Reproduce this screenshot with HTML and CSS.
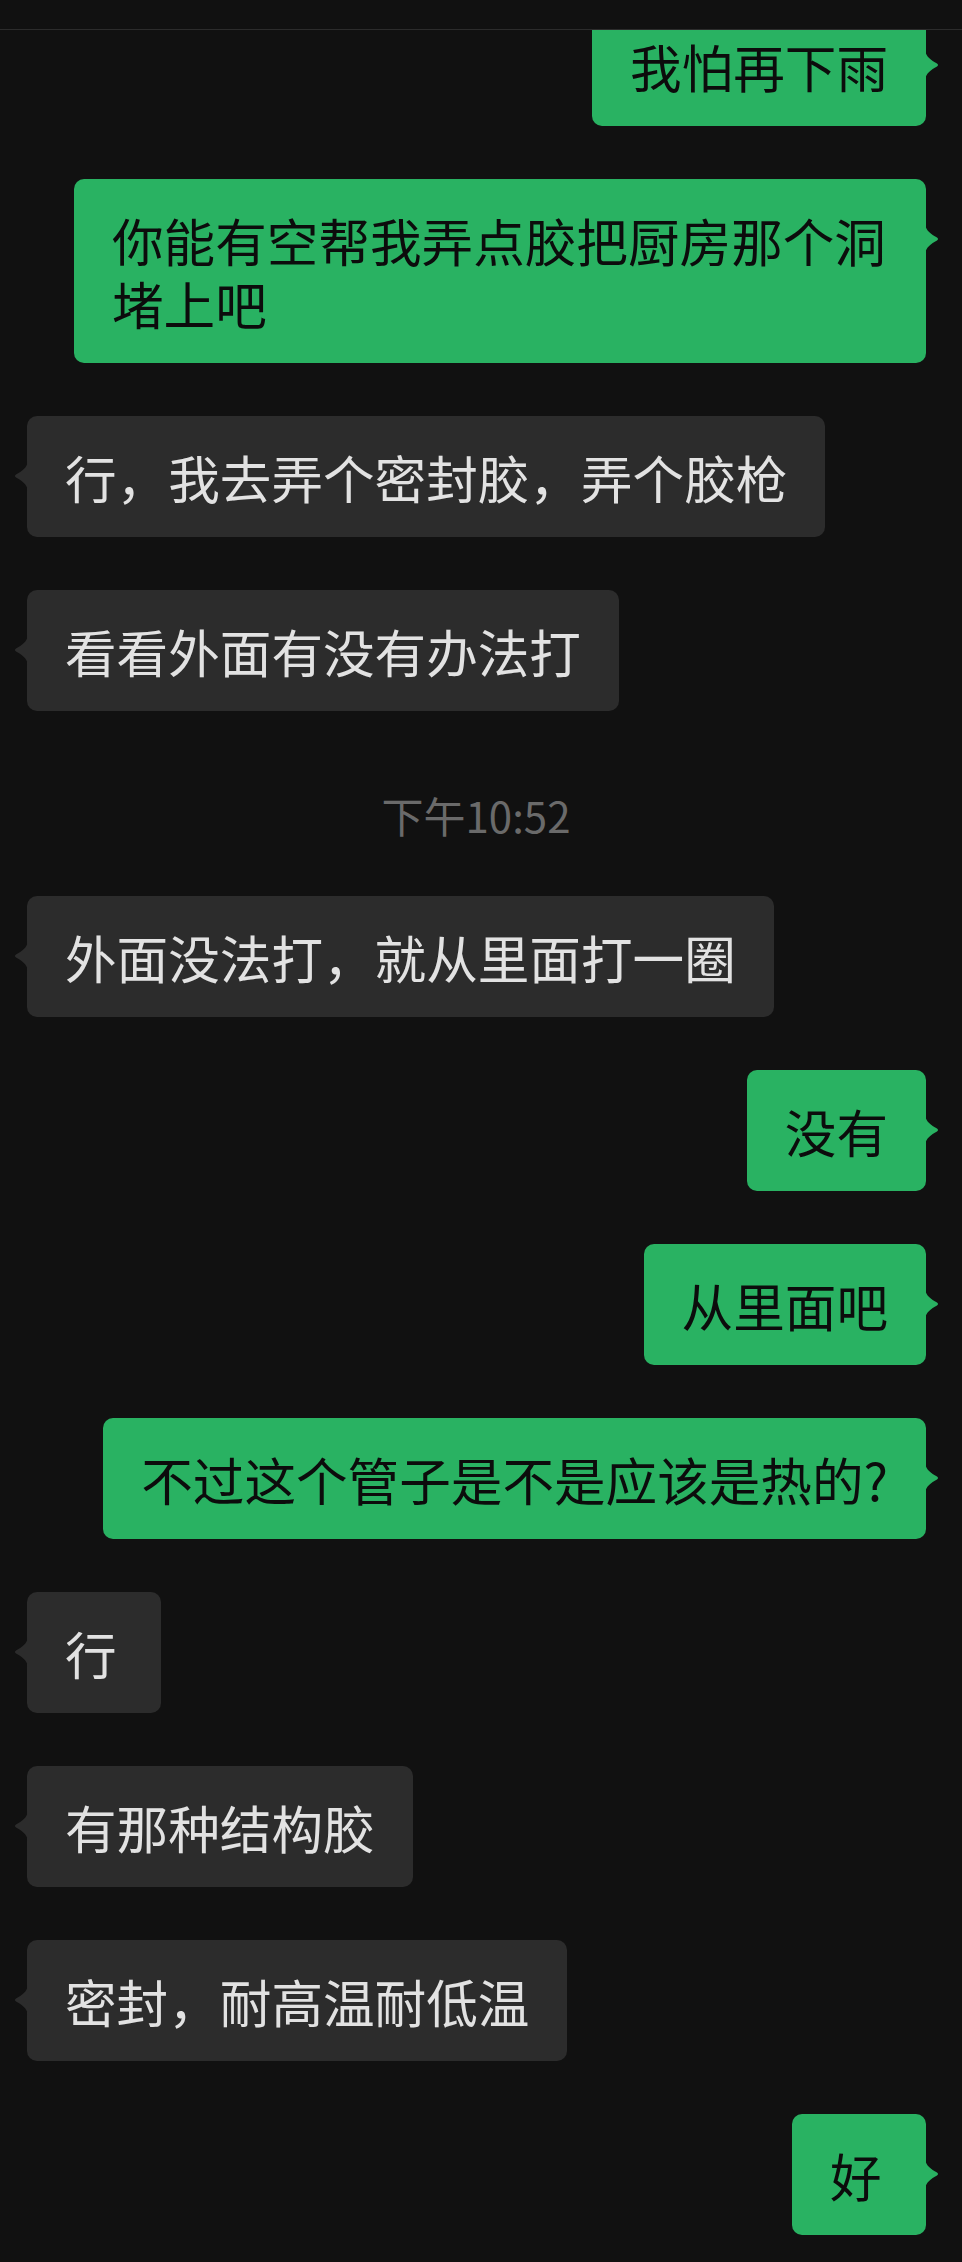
FILE: index.html
```html
<!DOCTYPE html>
<html lang="zh-CN">
<head>
<meta charset="utf-8">
<title>聊天记录</title>
<link rel="stylesheet" href="styles.css">
</head>
<body>
<div class="topbar"></div>
<main class="chat">
  <div class="row sent"><div class="bubble">我怕再下雨<svg class="tail" viewBox="0 0 14 30"><path d="M14 0 C13 7 8 10 2 13.5 Q0 15 2 16.5 C8 20 13 23 14 30 Z"/></svg></div></div>
  <div class="row sent"><div class="bubble">你能有空帮我弄点胶把厨房那个洞堵上吧<svg class="tail" viewBox="0 0 14 30"><path d="M14 0 C13 7 8 10 2 13.5 Q0 15 2 16.5 C8 20 13 23 14 30 Z"/></svg></div></div>
  <div class="row recv"><div class="bubble">行，我去弄个密封胶，弄个胶枪<svg class="tail" viewBox="0 0 14 30"><path d="M14 0 C13 7 8 10 2 13.5 Q0 15 2 16.5 C8 20 13 23 14 30 Z"/></svg></div></div>
  <div class="row recv"><div class="bubble">看看外面有没有办法打<svg class="tail" viewBox="0 0 14 30"><path d="M14 0 C13 7 8 10 2 13.5 Q0 15 2 16.5 C8 20 13 23 14 30 Z"/></svg></div></div>
  <div class="time">下午10:52</div>
  <div class="row recv"><div class="bubble">外面没法打，就从里面打一圈<svg class="tail" viewBox="0 0 14 30"><path d="M14 0 C13 7 8 10 2 13.5 Q0 15 2 16.5 C8 20 13 23 14 30 Z"/></svg></div></div>
  <div class="row sent"><div class="bubble">没有<svg class="tail" viewBox="0 0 14 30"><path d="M14 0 C13 7 8 10 2 13.5 Q0 15 2 16.5 C8 20 13 23 14 30 Z"/></svg></div></div>
  <div class="row sent"><div class="bubble">从里面吧<svg class="tail" viewBox="0 0 14 30"><path d="M14 0 C13 7 8 10 2 13.5 Q0 15 2 16.5 C8 20 13 23 14 30 Z"/></svg></div></div>
  <div class="row sent"><div class="bubble">不过这个管子是不是应该是热的?<svg class="tail" viewBox="0 0 14 30"><path d="M14 0 C13 7 8 10 2 13.5 Q0 15 2 16.5 C8 20 13 23 14 30 Z"/></svg></div></div>
  <div class="row recv"><div class="bubble">行<svg class="tail" viewBox="0 0 14 30"><path d="M14 0 C13 7 8 10 2 13.5 Q0 15 2 16.5 C8 20 13 23 14 30 Z"/></svg></div></div>
  <div class="row recv"><div class="bubble">有那种结构胶<svg class="tail" viewBox="0 0 14 30"><path d="M14 0 C13 7 8 10 2 13.5 Q0 15 2 16.5 C8 20 13 23 14 30 Z"/></svg></div></div>
  <div class="row recv"><div class="bubble">密封，耐高温耐低温<svg class="tail" viewBox="0 0 14 30"><path d="M14 0 C13 7 8 10 2 13.5 Q0 15 2 16.5 C8 20 13 23 14 30 Z"/></svg></div></div>
  <div class="row sent"><div class="bubble">好<svg class="tail" viewBox="0 0 14 30"><path d="M14 0 C13 7 8 10 2 13.5 Q0 15 2 16.5 C8 20 13 23 14 30 Z"/></svg></div></div>
</main>
</body>
</html>
```

FILE: styles.css
```css
html, body {
  margin: 0;
  padding: 0;
  background: #111111;
}

body {
  font-family: "Noto Sans CJK SC", "Noto Sans", sans-serif;
  position: relative;
}

.topbar {
  position: absolute;
  top: 0;
  left: 0;
  right: 0;
  height: 29px;
  background: #111111;
  border-bottom: 1px solid #2c2c2c;
  z-index: 2;
}

.chat {
  display: flex;
  flex-direction: column;
  gap: 53px;
  padding: 5px 0 26px;
}

.row {
  display: flex;
}

.row.recv {
  justify-content: flex-start;
  padding-left: 27px;
}

.row.sent {
  justify-content: flex-end;
  padding-right: 36px;
}

.bubble {
  position: relative;
  box-sizing: border-box;
  max-width: 852px;
  min-width: 134px;
  padding: 29px 38px;
  font-size: 51.6px;
  line-height: 63px;
  border-radius: 10px;
}

.recv .bubble {
  background: #2c2c2c;
  color: #e2e2e2;
}

.sent .bubble {
  background: #29b262;
  color: #0c0c0c;
}

.tail {
  position: absolute;
  top: 45px;
  width: 14px;
  height: 30px;
}

.recv .tail {
  left: -13px;
  fill: #2c2c2c;
}

.sent .tail {
  right: -13px;
  fill: #29b262;
  transform: scaleX(-1);
}

.time {
  text-align: center;
  font-size: 42px;
  line-height: 50px;
  color: #6a6a6a;
  margin: 26px 0 3px;
  padding-right: 10px;
}
```
